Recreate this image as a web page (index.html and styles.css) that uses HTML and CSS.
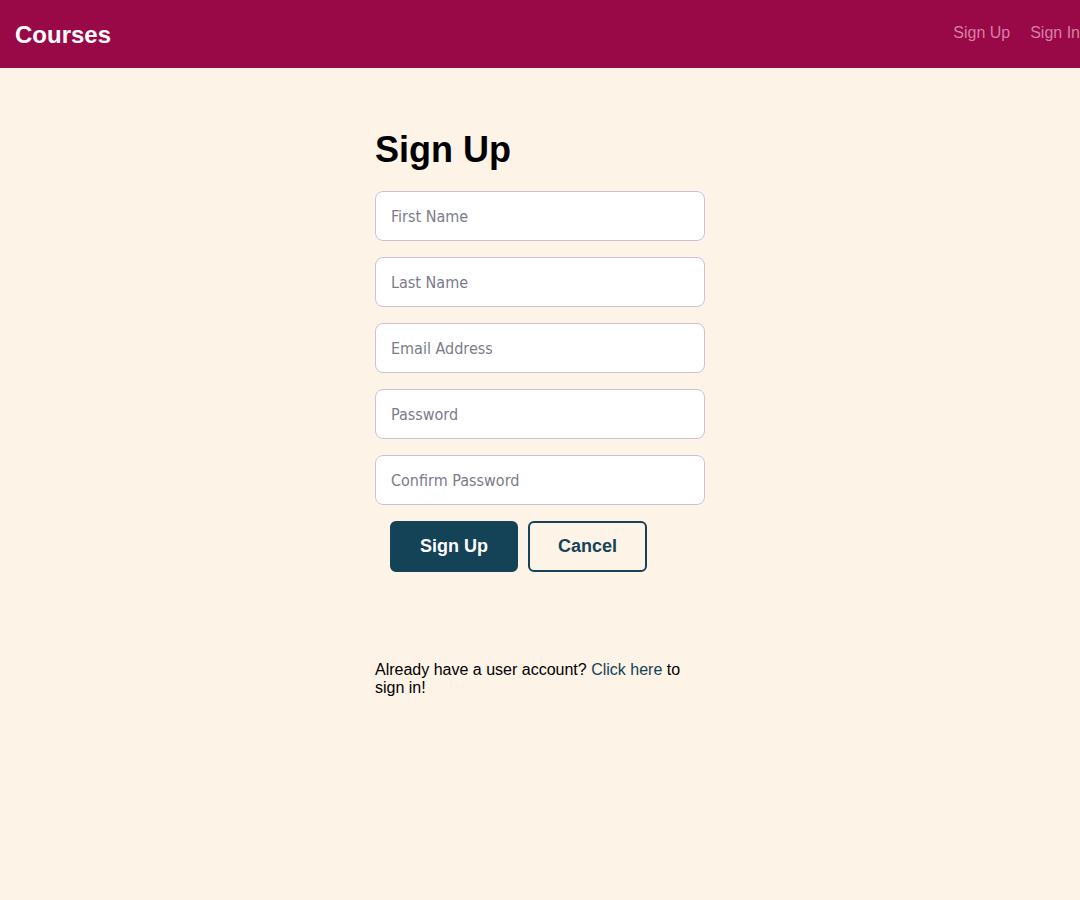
FILE: index.html
```html
<!DOCTYPE html>
<html lang="en">
<head>
<meta charset="utf-8">
<title>Courses - Sign Up</title>
<link rel="stylesheet" href="styles.css">
</head>
<body>
<header class="header">
  <h1 class="logo">Courses</h1>
  <nav class="nav">
    <a class="nav-link" href="#">Sign Up</a>
    <a class="nav-link" href="#">Sign In</a>
  </nav>
</header>
<main class="form-wrap">
  <h2 class="title">Sign Up</h2>
  <form class="form">
    <input class="field" type="text" placeholder="First Name">
    <input class="field" type="text" placeholder="Last Name">
    <input class="field" type="email" placeholder="Email Address">
    <input class="field" type="password" placeholder="Password">
    <input class="field" type="password" placeholder="Confirm Password">
    <div class="actions">
      <button class="btn btn-primary" type="button">Sign Up</button>
      <button class="btn btn-secondary" type="button">Cancel</button>
    </div>
  </form>
  <p class="note">Already have a user account? <a class="link" href="#">Click here</a> to sign in!</p>
</main>
</body>
</html>
```
FILE: styles.css
```css
* { box-sizing: border-box; }
html, body { margin: 0; padding: 0; }
body {
  background: #fdf3e7;
  font-family: "Liberation Sans", Arial, sans-serif;
  color: #000;
  min-height: 900px;
}
.header {
  height: 68px;
  background: #990847;
  display: flex;
  align-items: center;
  justify-content: space-between;
  padding: 0 0 0 15px;
  overflow: hidden;
}
.logo {
  margin: 0;
  color: #fff;
  font-size: 24px;
  font-weight: bold;
  padding-top: 2px;
}
.nav {
  display: flex;
  gap: 20px;
  margin-right: 0;
  padding-bottom: 2px;
  white-space: nowrap;
}
.nav-link {
  color: #d77fa6;
  text-decoration: none;
  font-size: 16px;
}
.form-wrap {
  width: 330px;
  margin: 0 auto;
  padding-top: 60px;
}
.title {
  margin: 0 0 19px;
  font-size: 36px;
  font-weight: bold;
  line-height: 44px;
}
.form {
  display: flex;
  flex-direction: column;
  gap: 16px;
}
.field {
  width: 330px;
  height: 50px;
  border: 1px solid #cbc3d3;
  border-radius: 8px;
  background: #fff;
  padding: 0 15px;
  font-family: "DejaVu Sans Condensed", "DejaVu Sans", sans-serif;
  font-size: 16px;
  color: #333;
}
.field::placeholder { color: #7b7b8a; }
.actions {
  display: flex;
  gap: 10px;
  padding-left: 15px;
}
.btn {
  height: 51px;
  border-radius: 6px;
  font-family: "Liberation Sans", Arial, sans-serif;
  font-size: 18px;
  font-weight: bold;
  cursor: pointer;
}
.btn-primary {
  width: 128px;
  background: #144257;
  color: #fff;
  border: 2px solid #144257;
}
.btn-secondary {
  width: 119px;
  background: transparent;
  color: #144257;
  border: 2px solid #144257;
}
.note {
  margin: 89px 0 0;
  font-size: 16px;
  line-height: 18px;
  width: 320px;
}
.link {
  color: #144257;
  text-decoration: none;
}
```
